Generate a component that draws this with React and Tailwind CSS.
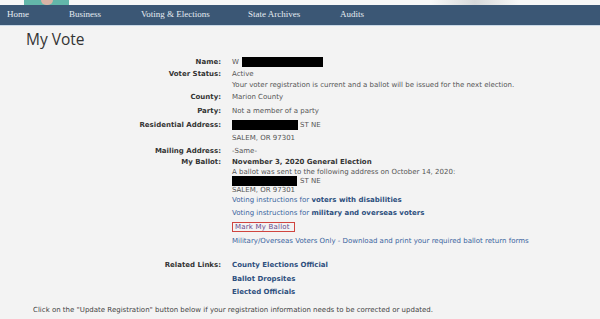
import React from 'react';

const body = { fontFamily: '"DejaVu Sans", Verdana, sans-serif' };

function Row({ label, children, className = '' }) {
    return (
        <div className={`grid grid-cols-[221px_1fr] gap-x-[11px] ${className}`}>
            <div className="text-right font-bold text-[#333]">{label}</div>
            <div>{children}</div>
        </div>
    );
}

function Redact({ w }) {
    return <span className={`inline-block h-[10px] bg-black align-middle ${w}`} />;
}

export default function App() {
    return (
        <div className="w-[600px] h-[319px] overflow-hidden bg-[#f3f3f3]" style={body}>
            {/* photo strip */}
            <div className="flex h-[5px] bg-[#f7f8f8]">
                <div className="ml-[24px] w-[45px] bg-[#63b7aa] flex justify-center">
                    <div className="w-[12px] bg-[#d9b3a6] rounded-b-full" />
                </div>
                <div className="ml-[362px] w-[88px] bg-gradient-to-r from-[#f7f8f8] via-[#d7d9da] to-[#f7f8f8]" />
            </div>

            {/* nav */}
            <nav className="flex items-center h-[20px] bg-[#3b5775] text-[#e6ecf2] text-[9px]" style={{ fontFamily: '"Liberation Serif", serif' }}>
                <span className="ml-[7px] w-[62px]">Home</span>
                <span className="w-[72px]">Business</span>
                <span className="w-[107px]">Voting &amp; Elections</span>
                <span className="w-[92px]">State Archives</span>
                <span>Audits</span>
            </nav>
            <div className="h-[1px] bg-[#c9d8e6]" />

            <h1 className="ml-[26px] mt-[3px] text-[15.5px] leading-[20px] text-[#333]" style={{ fontFamily: '"Open Sans", sans-serif' }}>My Vote</h1>

            <div className="mt-[8px] text-[7px] leading-[10px] text-[#555]">
                <Row label="Name:">
                    <span className="inline-flex items-center h-[10px]">W<span className="ml-[3px]"><Redact w="w-[81px]" /></span></span>
                </Row>
                <Row label="Voter Status:" className="mt-[2px]">
                    <div>Active</div>
                    <div className="mt-[1px]">Your voter registration is current and a ballot will be issued for the next election.</div>
                </Row>
                <Row label="County:" className="mt-[2px]">Marion County</Row>
                <Row label="Party:" className="mt-[4px]">Not a member of a party</Row>
                <Row label="Residential Address:" className="mt-[4px]">
                    <div className="flex items-center h-[10px]"><Redact w="w-[66px]" /><span className="ml-[2px]">ST NE</span></div>
                    <div className="mt-[3px]">SALEM, OR 97301</div>
                </Row>
                <Row label="Mailing Address:" className="mt-[3px]">-Same-</Row>
                <Row label="My Ballot:" className="mt-[1px]">
                    <div className="font-bold text-[#333]">November 3, 2020 General Election</div>
                    <div>A ballot was sent to the following address on October 14, 2020:</div>
                    <div className="flex items-center h-[8px]"><Redact w="w-[65px] h-[8px]" /><span className="ml-[3px]">ST NE</span></div>
                    <div>SALEM, OR 97301</div>
                    <div className="text-[#3a64a0]">Voting instructions for <span className="font-bold text-[#2d4f7e]">voters with disabilities</span></div>
                    <div className="mt-[3px] text-[#3a64a0]">Voting instructions for <span className="font-bold text-[#2d4f7e]">military and overseas voters</span></div>
                    <div className="mt-[4px] w-[63px] border border-[#d0453f] px-[2px] text-[#6a4a8c] leading-[8px] tracking-[0.2px]">Mark My Ballot</div>
                    <div className="mt-[4px] text-[#3a64a0]">Military/Overseas Voters Only - Download and print your required ballot return forms</div>
                </Row>
                <Row label="Related Links:" className="mt-[14px]">
                    <div className="font-bold text-[#2d4f7e]">County Elections Official</div>
                    <div className="mt-[4px] font-bold text-[#2d4f7e]">Ballot Dropsites</div>
                    <div className="mt-[3px] font-bold text-[#2d4f7e]">Elected Officials</div>
                </Row>
                <p className="mt-[8px] ml-[33px] text-[#444]">Click on the "Update Registration" button below if your registration information needs to be corrected or updated.</p>
            </div>
        </div>
    );
}
